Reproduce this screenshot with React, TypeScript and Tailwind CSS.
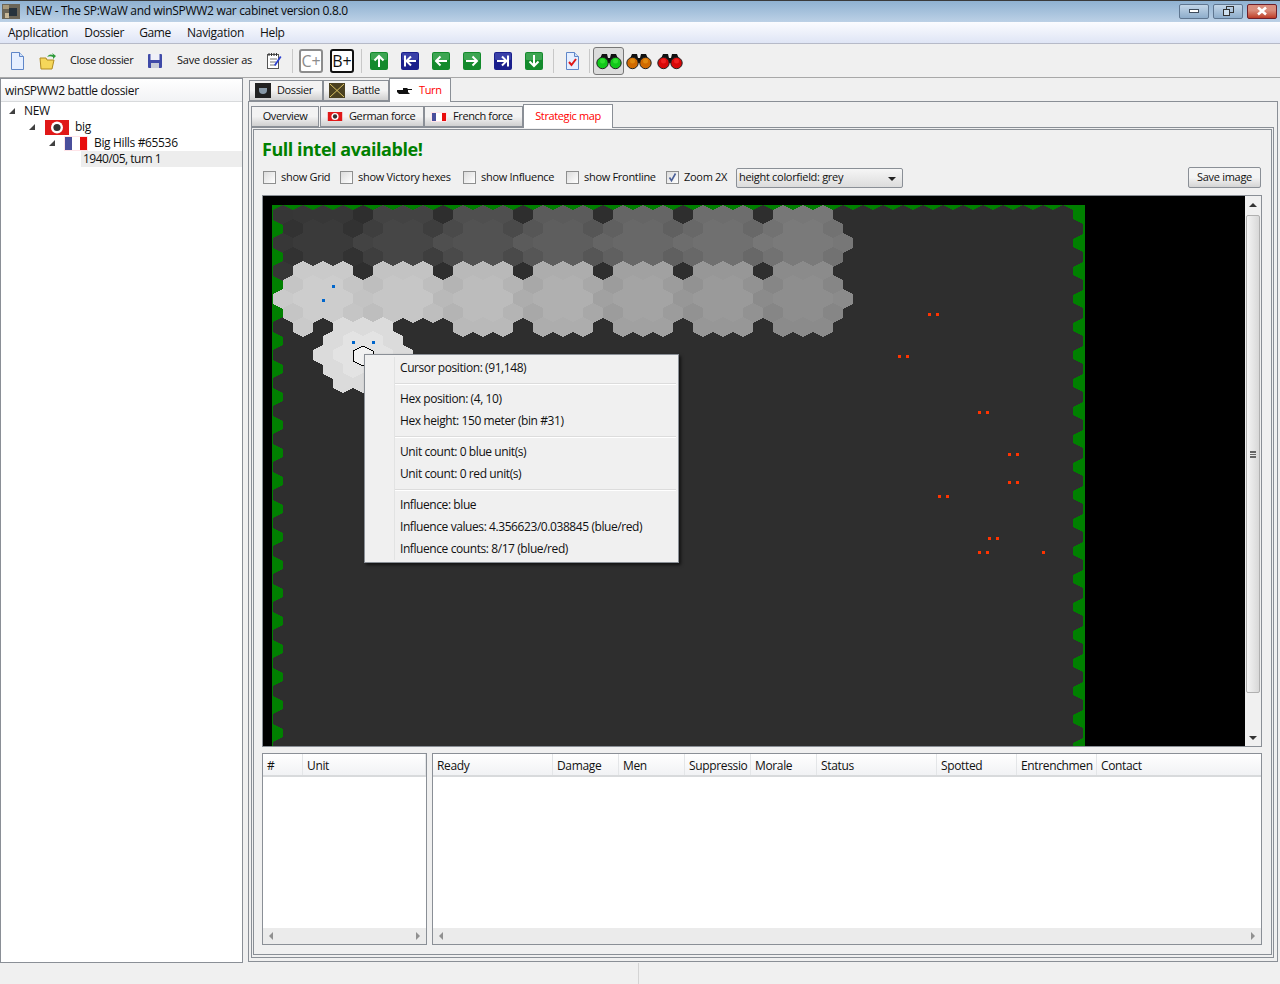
import type { ReactNode } from 'react'

// hex grid numbers taken from the screenshot (page coordinates)
const HEX_W = 20
const ROW_H = 14
const hexPoints = (cx: number, cy: number) =>
  [
    [cx, cy - 10],
    [cx + 10.3, cy - 5],
    [cx + 10.3, cy + 5],
    [cx, cy + 10],
    [cx - 10, cy + 5],
    [cx - 10, cy - 5],
  ]
    .map((p) => p.join(','))
    .join(' ')

const grey = (v: number) => `rgb(${v},${v},${v})`
const UPPER = [58, 70, 82, 94, 104, 112, 122]
const LOWER = [205, 198, 188, 176, 164, 154, 142]
const DARK = 46

type Hex = { cx: number; cy: number; fill: string }

function buildHexes() {
  const base: Hex[] = []
  for (let r = 0; r <= 39; r++) {
    const odd = r % 2 === 1
    for (let c = 0; c < 40; c++) {
      base.push({ cx: 283 + c * HEX_W + (odd ? 10 : 0), cy: 215 + r * ROW_H, fill: grey(DARK) })
    }
  }
  const bands: Hex[] = []
  for (let r = 0; r <= 8; r++) {
    const cy = 215 + r * ROW_H
    const table = r < 4 ? UPPER : LOWER
    const mid = r < 4 ? 2 : 6
    const dist = Math.abs(r - mid)
    for (let i = 0; i < 7; i++) {
      const center = 323 + 80 * i
      const offsets =
        dist === 2 ? [-20, 0, 20] : dist === 1 ? [-30, -10, 10, 30] : [-40, -20, 0, 20]
      for (const dx of offsets) {
        const cx = center + dx
        if (r === 8 && i < 2 && !(cx === 303)) continue
        const adx = Math.abs(dx)
        const shade = dist === 2 ? 3 : adx === 30 ? 8 : adx === 40 ? 3 : 0
        bands.push({ cx, cy, fill: grey(table[i] - shade) })
      }
    }
    if (r === 2 || r === 6) bands.push({ cx: 843, cy, fill: grey(table[6] - 3) })
    if (r === 0 || r === 4) bands.push({ cx: 283, cy, fill: grey(54) })
  }
  const hill: [number, number[]][] = [
    [8, [343, 363, 383]],
    [9, [333, 353, 373, 393]],
    [10, [323, 343, 383, 403]],
    [11, [333, 353, 373, 393]],
    [12, [343, 363, 383]],
  ]
  for (const [r, xs] of hill) {
    for (const cx of xs) {
      const core = Math.abs(cx - 363) <= 20 && r > 8 && r < 12
      bands.push({ cx, cy: 215 + r * ROW_H, fill: grey(core ? 227 : 219) })
    }
  }
  return { base, bands }
}

const { base, bands } = buildHexes()

const RED_DOTS = [
  [929, 314], [937, 314], [899, 356], [907, 356], [979, 412], [987, 412], [1009, 454], [1017, 454],
  [1009, 482], [1017, 482], [939, 496], [947, 496], [989, 538], [997, 538], [979, 552], [987, 552], [1043, 552],
]
const BLUE_DOTS = [[333, 286], [323, 300], [353, 342], [373, 342]]

function HexMap() {
  return (
    <svg width={982} height={550} viewBox="263 196 982 550" shapeRendering="crispEdges" className="block">
      <rect x={263} y={196} width={982} height={550} fill="#000" />
      <rect x={272} y={205} width={813} height={541} fill="#008000" />
      <clipPath id="mapClip">
        <rect x={272} y={205} width={813} height={541} />
      </clipPath>
      <g clipPath="url(#mapClip)">
        {base.map((h, i) => (
          <polygon key={i} points={hexPoints(h.cx, h.cy)} fill={h.fill} />
        ))}
        {bands.map((h, i) => (
          <polygon key={i} points={hexPoints(h.cx, h.cy)} fill={h.fill} />
        ))}
        <polygon points={hexPoints(363, 356)} fill="#f2f2f2" stroke="#000" strokeWidth={1} />
      </g>
      {RED_DOTS.map(([x, y], i) => (
        <rect key={i} x={x - 1} y={y - 1} width={3} height={3} fill="#ff3300" />
      ))}
      {BLUE_DOTS.map(([x, y], i) => (
        <rect key={i} x={x - 1} y={y - 1} width={3} height={3} fill="#0066cc" />
      ))}
    </svg>
  )
}

function ArrowIcon({ dir, blue }: { dir: 'up' | 'down' | 'left' | 'right' | 'first' | 'last'; blue?: boolean }) {
  const paths: Record<string, string> = {
    up: 'M9 15V4M4.5 8.5L9 4l4.5 4.5',
    down: 'M9 3v11M4.5 9.5L9 14l4.5-4.5',
    left: 'M15 9H4M8.5 4.5L4 9l4.5 4.5',
    right: 'M3 9h11M9.5 4.5L14 9l-4.5 4.5',
    first: 'M4 3.5v11M15 9H5.5M10 4.5L5.5 9l4.5 4.5',
    last: 'M14 3.5v11M3 9h9.5M8 4.5L12.5 9 8 13.5',
  }
  return (
    <svg width={18} height={18} viewBox="0 0 18 18" className="shrink-0">
      <rect x={0} y={0} width={18} height={18} rx={2} fill={blue ? '#1a1f8c' : '#138a2c'} />
      <rect x={1} y={1} width={16} height={7} rx={1} fill={blue ? '#3a40a8' : '#3da552'} />
      <path d={paths[dir]} fill="none" stroke="#fff" strokeWidth={2} />
    </svg>
  )
}

function Binoculars({ color, top }: { color: string; top: string }) {
  return (
    <svg width={26} height={18} viewBox="0 0 26 18" className="shrink-0">
      <path d="M3 9L6 2h5l1 4h2l1-4h5l3 7z" fill="#111" />
      <rect x={10} y={6} width={6} height={5} fill="#111" />
      <circle cx={6.5} cy={11} r={5.7} fill={color} stroke="#222" strokeWidth={1} />
      <circle cx={19.5} cy={11} r={5.7} fill={color} stroke="#222" strokeWidth={1} />
      <circle cx={6.5} cy={9} r={2.5} fill={top} />
      <circle cx={19.5} cy={9} r={2.5} fill={top} />
    </svg>
  )
}

function FrenchFlag({ w = 24, h = 15 }: { w?: number; h?: number }) {
  return (
    <svg width={w} height={h} viewBox="0 0 24 15" className="shrink-0" shapeRendering="crispEdges">
      <rect width={24} height={15} fill="#ffe4e8" />
      <rect x={1} y={1} width={7} height={13} fill="#4a4f9c" />
      <rect x={8} y={1} width={8} height={13} fill="#fff" />
      <rect x={16} y={1} width={7} height={13} fill="#e80c0c" />
    </svg>
  )
}

// red banner, the emblem is only a dark mark on the white disc
function GermanFlag({ w = 24, h = 15 }: { w?: number; h?: number }) {
  return (
    <svg width={w} height={h} viewBox="0 0 24 15" className="shrink-0">
      <rect width={24} height={15} fill="#e01818" />
      <circle cx={12} cy={7.5} r={6} fill="#fff" />
      <circle cx={12} cy={7.5} r={3.6} fill="#333" />
    </svg>
  )
}

function Doc({ check }: { check?: boolean }) {
  return (
    <svg width={16} height={18} viewBox="0 0 16 18" className="shrink-0">
      <path d="M2.5.5h8l4 4v13h-12z" fill="#e6efff" stroke="#5f86c8" />
      <path d="M10.5.5v4h4" fill="#cfe0f8" stroke="#5f86c8" />
      {check && <path d="M5 10l2.5 3L12 7" fill="none" stroke="#e01818" strokeWidth={2} />}
    </svg>
  )
}

function CheckBox({ label, checked, className }: { label: string; checked?: boolean; className: string }) {
  return (
    <div className={`flex items-center gap-[5px] ${className}`}>
      <div className="flex h-[13px] w-[13px] items-center justify-center border border-[#8e8f8f] bg-gradient-to-br from-[#dcdcdc] to-white">
        {checked && (
          <svg width={11} height={11} viewBox="0 0 11 11">
            <path d="M2.5 5.5l2 3.2L8.5 1.5" fill="none" stroke="#4a5f97" strokeWidth={1.6} />
          </svg>
        )}
      </div>
      <span>{label}</span>
    </div>
  )
}

function Tab({ children, active, className }: { children: ReactNode; active?: boolean; className: string }) {
  return (
    <div
      className={`flex items-center border border-[#8a8f96] text-[11px] tracking-[-0.38px] ${
        active
          ? 'z-10 -mb-px border-b-0 bg-white text-[#ff0000]'
          : 'bg-gradient-to-b from-[#f3f3f3] from-50% to-[#d0d0d0] text-[#111]'
      } ${className}`}
    >
      {children}
    </div>
  )
}

function Sep({ className = '' }: { className?: string }) {
  return <div className={`h-[24px] w-px shrink-0 bg-[#c8c8c8] ${className}`} />
}

function Th({ label, className }: { label: string; className: string }) {
  return <div className={`shrink-0 overflow-hidden whitespace-nowrap border-[#e4e6e8] pl-[4px] pt-[3px] ${className}`}>{label}</div>
}

function HScroll() {
  return (
    <div className="flex h-[16px] shrink-0 items-center justify-between bg-[#ebebeb] px-[6px]">
      <span className="h-0 w-0 border-y-[4px] border-r-[4px] border-y-transparent border-r-[#909090]" />
      <span className="h-0 w-0 border-y-[4px] border-l-[4px] border-y-transparent border-l-[#909090]" />
    </div>
  )
}

function TreeRow({ pad, arrow, children, className = '' }: { pad: string; arrow?: boolean; children: ReactNode; className?: string }) {
  return (
    <div className={`flex h-[16px] items-center ${pad} ${className}`}>
      {arrow && <span className="mr-[10px] h-0 w-0 border-b-[6px] border-l-[6px] border-b-[#404040] border-l-transparent" />}
      {children}
    </div>
  )
}

function MenuLine({ children }: { children: ReactNode }) {
  return <div className="flex h-[22px] items-center pl-[35px] tracking-[-0.42px]">{children}</div>
}

function MenuSep() {
  return <div className="mb-[3px] ml-[30px] mr-[2px] mt-[4px] h-[2px] border-y border-y-[#dcdcdc] border-b-white" />
}

export default function App() {
  return (
    <div className="flex h-[984px] w-[1280px] flex-col overflow-hidden bg-[#f0f0f0] font-['Open_Sans','Liberation_Sans',sans-serif] text-[12px] tracking-[-0.35px] text-[#111]">
      {/* title bar */}
      <div className="flex h-[22px] shrink-0 items-center border-t border-[#3a3a3a] bg-gradient-to-b from-[#8fb1d1] to-[#bcd1e6] pb-[1px] pl-[2px] pr-[3px]">
        <svg width={18} height={15} viewBox="0 0 18 15" className="shrink-0">
          <rect width={18} height={15} fill="#6b6557" />
          <rect x={7} y={4} width={8} height={8} fill="#26323c" />
          <rect x={1} y={1} width={6} height={4} fill="#a89a7c" />
          <rect x={3} y={9} width={4} height={5} fill="#c8b898" />
        </svg>
        <span className="ml-[6px] tracking-[-0.31px] text-[#0a0a0a]">NEW - The SP:WaW and winSPWW2 war cabinet version 0.8.0</span>
        <div className="ml-auto flex items-center gap-[4px]">
          <div className="flex h-[15px] w-[30px] items-center justify-center rounded-[2px] border border-[#5f7690] bg-gradient-to-b from-[#c3d6e8] to-[#8eadcb]">
            <div className="h-[4px] w-[10px] border border-[#3d4b5b] bg-white" />
          </div>
          <div className="flex h-[15px] w-[30px] items-center justify-center rounded-[2px] border border-[#5f7690] bg-gradient-to-b from-[#c3d6e8] to-[#8eadcb]">
            <svg width={13} height={10} viewBox="0 0 13 10">
              <rect x={4.5} y={0.5} width={7} height={6} fill="none" stroke="#333" />
              <rect x={1.5} y={3.5} width={6} height={6} fill="#cfe0ee" stroke="#333" />
            </svg>
          </div>
          <div className="flex h-[15px] w-[30px] items-center justify-center rounded-[2px] border border-[#6e1f2a] bg-gradient-to-b from-[#d98d7c] from-40% to-[#bd3b26]">
            <svg width={12} height={10} viewBox="0 0 12 10">
              <path d="M2 1.5l8 7M10 1.5l-8 7" stroke="#fff" strokeWidth={2.6} />
            </svg>
          </div>
        </div>
      </div>

      {/* menu bar */}
      <div className="flex h-[22px] shrink-0 items-center border-b border-[#b6bac8] bg-gradient-to-b from-[#fbfcff] to-[#dfe5f5] pl-[8px] text-[#111]">
        <span className="tracking-[-0.22px]">Application</span>
        <span className="ml-[16px] tracking-[-0.3px]">Dossier</span>
        <span className="ml-[15px]">Game</span>
        <span className="ml-[16px] tracking-[-0.28px]">Navigation</span>
        <span className="ml-[16px]">Help</span>
      </div>

      {/* toolbar */}
      <div className="flex h-[34px] shrink-0 items-center border-b border-[#a8a8a8] pl-[9px] text-[11px] tracking-[-0.2px]">
        <Doc />
        <svg width={18} height={18} viewBox="0 0 18 18" className="ml-[14px] shrink-0">
          <path d="M1 6h6l1 2h7l-2 9H2z" fill="#f5d75a" stroke="#b08a20" />
          <path d="M8 5c2-3 4-3 6-2l-1-2 4 3-3 3 0-2c-2-1-4-1-6 0z" fill="#2e9a3a" />
        </svg>
        <span className="ml-[13px] w-[63px] whitespace-nowrap tracking-[-0.35px]">Close dossier</span>
        <svg width={16} height={16} viewBox="0 0 16 16" className="ml-[14px] shrink-0">
          <rect x={1} y={1} width={14} height={14} rx={1} fill="#3f4aa8" />
          <rect x={3.5} y={1} width={9} height={6} fill="#f0f0f8" />
          <rect x={4} y={10} width={8} height={5} fill="#c8ccd8" />
        </svg>
        <span className="ml-[14px] w-[76px] whitespace-nowrap">Save dossier as</span>
        <svg width={16} height={18} viewBox="0 0 16 18" className="ml-[13px] shrink-0">
          <rect x={1.5} y={2.5} width={11} height={14} fill="#fff" stroke="#555" />
          <path d="M3 1v3M5.5 1v3M8 1v3M10.5 1v3" stroke="#333" />
          <path d="M4 7h7M4 10h6M4 13h5" stroke="#777" />
          <path d="M8 13l6-9 1.5 1-6 9z" fill="#2a3fd0" />
        </svg>
        <Sep className="ml-[10px]" />
        <div className="ml-[6px] flex h-[24px] w-[24px] shrink-0 items-center justify-center rounded-[3px] border-2 border-[#8c8c8c] bg-white text-[16px] tracking-normal text-[#8c8c8c]">C+</div>
        <div className="ml-[7px] flex h-[24px] w-[24px] shrink-0 items-center justify-center rounded-[3px] border-2 border-[#111] bg-white text-[16px] tracking-normal text-[#111]">B+</div>
        <Sep className="ml-[7px]" />
        <div className="ml-[8px] flex items-center gap-[13px]">
          <ArrowIcon dir="up" />
          <ArrowIcon dir="first" blue />
          <ArrowIcon dir="left" />
          <ArrowIcon dir="right" />
          <ArrowIcon dir="last" blue />
          <ArrowIcon dir="down" />
        </div>
        <Sep className="ml-[10px]" />
        <div className="ml-[10px]"><Doc check /></div>
        <Sep className="ml-[9px]" />
        <div className="ml-[3px] flex h-[28px] w-[31px] shrink-0 items-center justify-center rounded-[3px] border border-[#777] bg-[#dcdcdc]">
          <Binoculars color="#12c81a" top="#30e030" />
        </div>
        <div className="ml-[2px]"><Binoculars color="#d06a00" top="#e08a10" /></div>
        <div className="ml-[5px]"><Binoculars color="#d80808" top="#f02020" /></div>
      </div>

      {/* main */}
      <div className="flex min-h-0 flex-1">
        {/* dossier tree */}
        <div className="flex w-[243px] shrink-0 flex-col border border-[#8a8f96] bg-white">
          <div className="flex h-[23px] shrink-0 items-center border-b border-[#d8dadc] bg-gradient-to-b from-white to-[#f2f3f5] pl-[4px] pt-[2px]">winSPWW2 battle dossier</div>
          <div className="pt-[1px]">
            <TreeRow pad="pl-[8px]" arrow><span className="-ml-px">NEW</span></TreeRow>
            <TreeRow pad="pl-[28px]" arrow>
              <GermanFlag />
              <span className="ml-[6px]">big</span>
            </TreeRow>
            <TreeRow pad="pl-[48px]" arrow>
              <span className="-ml-px"><FrenchFlag /></span>
              <span className="ml-[6px]">Big Hills #65536</span>
            </TreeRow>
            <TreeRow pad="ml-[80px] pl-[2px] tracking-[-0.5px]" className="bg-[#ededed]">1940/05, turn 1</TreeRow>
          </div>
        </div>

        {/* right side */}
        <div className="ml-[5px] flex min-w-0 flex-1 flex-col pb-[1px] pr-[2px]">
          <div className="flex h-[23px] shrink-0 items-end pl-[1px]">
            <Tab className="h-[21px] w-[74px] pl-[5px]">
              <span className="flex h-[15px] w-[16px] items-center justify-center bg-[#222]">
                <span className="h-[6px] w-[8px] rounded-b-[4px] bg-[#8899a8]" />
              </span>
              <span className="ml-[6px]">Dossier</span>
            </Tab>
            <Tab className="h-[21px] w-[66px] pl-[5px]">
              <svg width={16} height={15} viewBox="0 0 16 15" className="shrink-0">
                <rect width={16} height={15} fill="#4a4020" />
                <path d="M1 1l14 13M15 1L1 14" stroke="#d8c060" />
              </svg>
              <span className="ml-[7px]">Battle</span>
            </Tab>
            <Tab active className="h-[24px] w-[62px] pl-[7px]">
              <svg width={16} height={8} viewBox="0 0 16 8" className="shrink-0">
                <path d="M0 3h6V1h4l1 1h4v1h-4v2l2 2H2L0 5z" fill="#111" />
              </svg>
              <span className="ml-[6px]">Turn</span>
            </Tab>
          </div>

          <div className="flex min-h-0 flex-1 flex-col border border-[#8a8f96] pb-[3px] pl-[2px] pr-[3px] pt-[2px]">
            <div className="flex h-[23px] shrink-0 items-end">
              <Tab className="h-[21px] w-[68px] justify-center">Overview</Tab>
              <Tab className="ml-[1px] h-[21px] w-[104px] pl-[6px]">
                <GermanFlag w={16} h={9} />
                <span className="ml-[6px]">German force</span>
              </Tab>
              <Tab className="h-[21px] w-[99px] pl-[6px]">
                <FrenchFlag w={16} h={10} />
                <span className="ml-[6px]">French force</span>
              </Tab>
              <Tab active className="h-[24px] w-[90px] justify-center">Strategic map</Tab>
            </div>

            {/* tab pane with the second frame inside it */}
            <div className="flex min-h-0 flex-1 flex-col border border-[#8a8f96] pb-[2px] pl-[1px] pr-[1px] pt-[1px]">
              <div className="flex min-h-0 flex-1 flex-col border border-[#8a8f96] pl-[8px] pr-[9px]">
                <div className="mt-[7px] h-[25px] text-[18px] font-bold leading-[25px] tracking-[-0.45px] text-[#008000]">Full intel available!</div>
                <div className="mt-[5px] flex h-[21px] items-center text-[11px] tracking-[-0.3px]">
                  <CheckBox label="show Grid" className="w-[78px] pl-[1px]" />
                  <CheckBox label="show Victory hexes" className="w-[123px]" />
                  <CheckBox label="show Influence" className="w-[103px]" />
                  <CheckBox label="show Frontline" className="w-[100px]" />
                  <CheckBox label="Zoom 2X" checked className="w-[70px]" />
                  <div className="flex h-[20px] w-[167px] items-center justify-between rounded-[2px] border border-[#8a8f96] bg-gradient-to-b from-[#f6f6f6] to-[#dcdcdc] pl-[2px] pr-[6px]">
                    <span>height colorfield: grey</span>
                    <span className="mt-[2px] h-0 w-0 border-x-[4px] border-t-[4px] border-x-transparent border-t-[#222]" />
                  </div>
                  <div className="ml-auto mr-[1px] flex h-[21px] w-[73px] items-center justify-center rounded-[2px] border border-[#8a8f96] bg-gradient-to-b from-[#f4f4f4] from-50% to-[#d4d4d4]">Save image</div>
                </div>

                {/* map with its floating menu */}
                <div className="relative mt-[7px] flex h-[552px] shrink-0 border border-[#8a8f96]">
                  <HexMap />
                  <div className="flex w-[16px] shrink-0 flex-col items-center bg-[#f0f0f0]">
                    <span className="mt-[7px] h-0 w-0 border-x-[4px] border-b-[4px] border-x-transparent border-b-[#333]" />
                    <div className="relative mt-[8px] flex h-[478px] w-[14px] items-center justify-center rounded-[2px] border border-[#b0b0b0] bg-gradient-to-r from-[#f4f4f4] to-[#d8d8d8]">
                      <span className="h-[7px] w-[6px] border-y border-[#666] bg-[linear-gradient(#666_1px,transparent_1px)] bg-[length:6px_2px]" />
                    </div>
                    <span className="mb-[6px] mt-auto h-0 w-0 border-x-[4px] border-t-[4px] border-x-transparent border-t-[#333]" />
                  </div>

                  <div className="absolute left-[101px] top-[158px] w-[315px] border border-[#8a8f96] bg-[#f0f0f0] pb-[2px] pt-[2px] shadow-[2px_2px_3px_rgba(0,0,0,0.6)]">
                    <div className="absolute bottom-[2px] left-[29px] top-[2px] w-px bg-[#e2e3e3]" />
                    <MenuLine>Cursor position: (91,148)</MenuLine>
                    <MenuSep />
                    <MenuLine>Hex position: (4, 10)</MenuLine>
                    <MenuLine>Hex height: 150 meter (bin #31)</MenuLine>
                    <MenuSep />
                    <MenuLine>Unit count: 0 blue unit(s)</MenuLine>
                    <MenuLine>Unit count: 0 red unit(s)</MenuLine>
                    <MenuSep />
                    <MenuLine>Influence: blue</MenuLine>
                    <MenuLine>Influence values: 4.356623/0.038845 (blue/red)</MenuLine>
                    <MenuLine>Influence counts: 8/17 (blue/red)</MenuLine>
                  </div>
                </div>

                {/* unit tables */}
                <div className="mt-[6px] flex h-[192px] shrink-0 gap-[5px]">
                  <div className="flex w-[165px] shrink-0 flex-col border border-[#8a8f96] bg-white">
                    <div className="flex h-[23px] shrink-0 border-b-2 border-[#d8dadc] bg-gradient-to-b from-white to-[#f1f2f4]">
                      <Th label="#" className="w-[40px] border-r" />
                      <Th label="Unit" className="w-[123px] border-r" />
                    </div>
                    <div className="flex-1" />
                    <HScroll />
                  </div>
                  <div className="flex min-w-0 flex-1 flex-col border border-[#8a8f96] bg-white">
                    <div className="flex h-[23px] shrink-0 overflow-hidden border-b-2 border-[#d8dadc] bg-gradient-to-b from-white to-[#f1f2f4]">
                      <Th label="Ready" className="w-[120px] border-r" />
                      <Th label="Damage" className="w-[66px] border-r" />
                      <Th label="Men" className="w-[66px] border-r" />
                      <Th label="Suppressio" className="w-[66px] border-r" />
                      <Th label="Morale" className="w-[66px] border-r" />
                      <Th label="Status" className="w-[120px] border-r" />
                      <Th label="Spotted" className="w-[80px] border-r" />
                      <Th label="Entrenchmen" className="w-[80px] border-r" />
                      <Th label="Contact" className="w-[120px]" />
                    </div>
                    <div className="flex-1" />
                    <HScroll />
                  </div>
                </div>
              </div>
            </div>
          </div>
        </div>
      </div>

      {/* status bar */}
      <div className="flex h-[21px] shrink-0">
        <div className="w-[639px] border-r border-[#d4d4d4]" />
      </div>
    </div>
  )
}
